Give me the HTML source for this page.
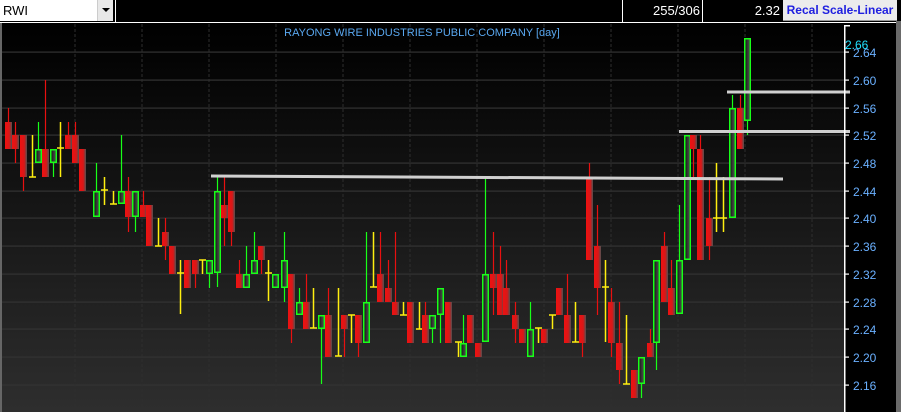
<!DOCTYPE html>
<html><head><meta charset="utf-8"><style>
html,body{margin:0;padding:0;background:#000;width:901px;height:412px;overflow:hidden;font-family:"Liberation Sans",sans-serif}
#top{position:absolute;left:0;top:0;width:901px;height:23px;background:#000}
.box{position:absolute;top:0;height:21px;box-sizing:border-box;font-size:13px;line-height:21px}
</style></head><body>
<div id="top">
<div class="box" style="left:0;width:98px;background:#fff;color:#000;padding-left:3px">RWI</div>
<div class="box" style="left:97px;width:16px;background:#e8e8e8;border-left:1px solid #ccc"><div style="position:absolute;left:4px;top:8px;width:0;height:0;border-left:4px solid transparent;border-right:4px solid transparent;border-top:4px solid #000"></div></div>
<div class="box" style="left:115px;width:508px;height:23px;border:1px solid #fff;border-top:none;border-right:none"></div>
<div class="box" style="left:622px;width:80px;height:23px;border-left:1px solid #fff;border-bottom:1px solid #fff;color:#fff;text-align:right;padding-right:2px">255/306</div>
<div class="box" style="left:702px;width:80px;height:23px;border-left:1px solid #fff;border-bottom:1px solid #fff;color:#fff;text-align:right;padding-right:2px">2.32</div>
<div class="box" style="left:783px;width:114px;height:21px;background:#ececec;color:#2020e0;font-weight:bold;font-size:12px;text-align:center;border-bottom:1px solid #999">Recal Scale-Linear</div>
<div style="position:absolute;left:896px;top:21px;width:5px;height:391px;background:#6a6a6a"></div>
<div style="position:absolute;left:0;top:22px;width:896px;height:1px;background:#fff"></div>
</div>
<svg id="s" width="901" height="412" style="position:absolute;left:0;top:0" xmlns="http://www.w3.org/2000/svg">
<defs>
<linearGradient id="bg" x1="0" y1="0" x2="0" y2="1"><stop offset="0" stop-color="#000"/><stop offset="1" stop-color="#2e2e2e"/></linearGradient>
<linearGradient id="rg" x1="0" y1="0" x2="1" y2="0"><stop offset="0" stop-color="#f01010"/><stop offset="0.6" stop-color="#d81818"/><stop offset="1" stop-color="#505050"/></linearGradient>
<linearGradient id="gg" x1="0" y1="0" x2="1" y2="0"><stop offset="0" stop-color="#111"/><stop offset="0.7" stop-color="#444"/><stop offset="1" stop-color="#222"/></linearGradient>
</defs>
<rect x="2" y="24" width="842" height="388" fill="url(#bg)"/>
<rect x="0" y="23" width="2" height="389" fill="#666"/>
<rect x="845" y="23" width="51" height="389" fill="#000"/>
<g id="grid"></g>
<text x="422" y="36" fill="#5aa8f0" font-size="11" text-anchor="middle" font-family="Liberation Sans,sans-serif">RAYONG WIRE INDUSTRIES PUBLIC COMPANY [day]</text>
<g id="c"></g>
<g fill="#d0d0d0">
<polygon points="211,174.5 783,177.5 783,180.5 211,177.5"/>
<rect x="679" y="130" width="171" height="3"/>
<rect x="727" y="90.5" width="123" height="3"/>
</g>
<rect x="844" y="25" width="1.5" height="387" fill="#fff"/>
<rect x="844" y="25" width="6" height="1.5" fill="#fff"/>
<g id="ax" font-size="12" fill="#6ab0ff" font-family="Liberation Sans,sans-serif"></g>
<text x="845" y="49" fill="#20e0ff" font-size="12" font-family="Liberation Sans,sans-serif">2.66</text>
</svg>
<script>
var NS="http://www.w3.org/2000/svg";
function el(p,t,a){var e=document.createElementNS(NS,t);for(var k in a)e.setAttribute(k,a[k]);p.appendChild(e);return e;}
var grid=document.getElementById("grid"),ax=document.getElementById("ax"),cg=document.getElementById("c");
var ys=[52,80,108,135,163,191,218,246,274,302,329,357,385],lb=["2.64","2.60","2.56","2.52","2.48","2.44","2.40","2.36","2.32","2.28","2.24","2.20","2.16"];
ys.forEach(function(y,i){el(grid,"rect",{x:2,y:y-0.5,width:842,height:1.2,fill:"#333"});
 el(ax,"rect",{x:844,y:y-0.5,width:5,height:1.2,fill:"#fff"});
 var t=el(ax,"text",{x:853,y:y+5});t.textContent=lb[i];});
for(var x=75;x<844;x+=67){el(grid,"line",{x1:x,y1:24,x2:x,y2:412,stroke:"#2e2e2e","stroke-width":1,"stroke-dasharray":"3,2"});}
var D=[
[5,'r',122,149,108,149],[12,'r',135,149,122,163],[20,'r',135,177,135,191],[29,'y',177,177,135,177],[35,'g',149,163,122,163],[42,'r',149,177,80,177],[50,'g',149,163,149,177],[57,'y',148,148,122,177],[65,'r',135,149,122,149],[72,'r',135,163,122,163],[79,'r',149,191,149,191],
[93,'g',191,217,163,217],[101,'y',190,190,177,205],[110,'y',204,204,191,204],[118,'g',191,204,135,204],[125,'r',191,217,177,232],[132,'g',191,217,191,232],[140,'r',205,217,191,217],[146,'r',205,246,205,246],[155,'y',246,246,218,246],[162,'r',232,246,218,260],[169,'r',246,274,246,274],[177,'y',273,273,260,314],[184,'r',260,288,260,288],[192,'r',260,274,260,288],[199,'y',260,260,260,274],[206,'g',260,274,260,288],
[214,'g',191,273,177,287],[221,'r',205,218,177,246],[228,'r',191,232,191,246],[236,'r',274,288,260,288],[243,'g',274,288,246,288],[251,'g',260,274,232,274],[258,'r',246,260,246,274],[265,'y',273,273,260,301],[272,'g',274,288,274,288],[281,'g',260,288,232,302],[288,'r',274,329,274,343],[296,'g',302,315,288,315],[303,'r',302,329,274,329],[310,'y',328,328,288,328],[318,'g',315,329,315,384],[325,'r',315,357,288,357],[335,'y',356,356,288,356],[341,'r',315,329,315,357],[348,'y',315,315,315,343],[355,'r',315,343,315,357],[363,'g',302,343,232,343],[370,'y',287,287,232,287],[377,'r',274,302,232,302],[385,'r',288,302,260,302],[392,'r',302,315,232,315],[400,'y',315,315,302,315],[407,'r',302,343,302,343],[416,'y',329,329,302,329],[422,'r',315,343,302,343],[429,'g',315,329,315,343],[437,'g',288,315,288,343],
[445,'r',302,343,302,343],[455,'y',342,342,342,357],[460,'g',343,357,315,357],[467,'r',315,343,315,343],[475,'r',343,357,343,357],[482,'g',274,342,177,342],[490,'r',274,288,232,315],[497,'r',274,315,246,315],[503,'r',288,315,260,315],[512,'r',315,329,302,343],[519,'r',329,343,329,343],[527,'g',329,357,302,357],[535,'y',328,328,328,343],[541,'r',329,343,329,343],[549,'y',315,315,315,329],[556,'r',288,315,288,315],[564,'r',315,343,274,343],[572,'y',342,342,302,342],[579,'r',315,343,315,357],[586,'r',177,260,163,260],[594,'r',246,288,205,315],[602,'y',287,287,260,342],[608,'r',302,343,288,357],[616,'r',343,370,302,384],[623,'y',384,384,315,384],[631,'r',370,398,370,398],[638,'g',357,384,357,398],[647,'r',343,357,329,357],[653,'g',260,343,260,370],[661,'r',246,302,232,302],[668,'r',288,315,260,315],[676,'g',260,314,205,314],[684,'g',135,260,135,260],[690,'r',135,149,135,177],[697,'r',149,260,135,260],[706,'r',218,246,177,260],[713,'y',218,218,163,232],[720,'y',218,218,177,232],[729,'g',108,218,95,218],[737,'r',108,149,95,149],[744,'g',38,121,38,135]
];
D.forEach(function(d){var x=d[0],t=d[1],a=d[2],b=d[3],h=d[4],l=d[5],cx=x+3.5;
 if(t=='y'){el(cg,"rect",{x:cx-0.75,y:h,width:1.5,height:Math.max(l-h,1),fill:"#ffef10"});el(cg,"rect",{x:x,y:a-0.75,width:7,height:1.5,fill:"#ffef10"});return;}
 var c=t=='r'?"#e81010":"#18ff18";
 el(cg,"rect",{x:cx-0.6,y:h,width:1.2,height:l-h,fill:c});
 if(t=='r')el(cg,"rect",{x:x,y:a,width:7,height:b-a,fill:"url(#rg)"});
 else el(cg,"rect",{x:x+0.75,y:a+0.75,width:5.5,height:b-a-1.5,fill:"url(#gg)",stroke:c,"stroke-width":1.5});
});
</script>
</body></html>
